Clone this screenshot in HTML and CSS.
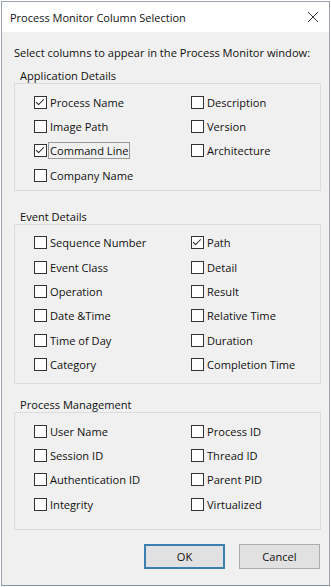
FILE: index.html
```html
<!DOCTYPE html>
<html lang="en">

<head>
    <meta charset="UTF-8">
    <meta name="viewport" content="width=device-width, initial-scale=1.0">
    <title>Process Monitor Column Selection</title>
    <link rel="stylesheet" href="styles.css">
</head>

<body>
    <div class="window">
        <div class="titlebar">
            <span class="title">Process Monitor Column Selection</span>
            <svg class="close" width="12" height="12" viewBox="0 0 12 12">
                <path d="M1 1 L11 11 M11 1 L1 11" stroke="#333" stroke-width="1" fill="none" />
            </svg>
        </div>

        <div class="content">
            <p class="prompt">Select columns to appear in the Process Monitor window:</p>

            <div class="group group-app">
                <div class="group-title">Application Details</div>
                <div class="opts">
                    <label class="opt"><span class="box checked"></span>Process Name</label>
                    <label class="opt"><span class="box"></span>Description</label>
                    <label class="opt"><span class="box"></span>Image Path</label>
                    <label class="opt"><span class="box"></span>Version</label>
                    <label class="opt"><span class="box checked"></span><span class="focus">Command Line</span></label>
                    <label class="opt"><span class="box"></span>Architecture</label>
                    <label class="opt"><span class="box"></span>Company Name</label>
                </div>
            </div>

            <div class="group group-event">
                <div class="group-title">Event Details</div>
                <div class="opts">
                    <label class="opt"><span class="box"></span>Sequence Number</label>
                    <label class="opt"><span class="box checked"></span>Path</label>
                    <label class="opt"><span class="box"></span>Event Class</label>
                    <label class="opt"><span class="box"></span>Detail</label>
                    <label class="opt"><span class="box"></span>Operation</label>
                    <label class="opt"><span class="box"></span>Result</label>
                    <label class="opt"><span class="box"></span>Date &amp;Time</label>
                    <label class="opt"><span class="box"></span>Relative Time</label>
                    <label class="opt"><span class="box"></span>Time of Day</label>
                    <label class="opt"><span class="box"></span>Duration</label>
                    <label class="opt"><span class="box"></span>Category</label>
                    <label class="opt"><span class="box"></span>Completion Time</label>
                </div>
            </div>

            <div class="group group-proc">
                <div class="group-title">Process Management</div>
                <div class="opts">
                    <label class="opt"><span class="box"></span>User Name</label>
                    <label class="opt"><span class="box"></span>Process ID</label>
                    <label class="opt"><span class="box"></span>Session ID</label>
                    <label class="opt"><span class="box"></span>Thread ID</label>
                    <label class="opt"><span class="box"></span>Authentication ID</label>
                    <label class="opt"><span class="box"></span>Parent PID</label>
                    <label class="opt"><span class="box"></span>Integrity</label>
                    <label class="opt"><span class="box"></span>Virtualized</label>
                </div>
            </div>

            <div class="buttons">
                <button class="btn btn-ok">OK</button>
                <button class="btn">Cancel</button>
            </div>
        </div>
    </div>
</body>

</html>
```

FILE: styles.css
```css
* {
    box-sizing: border-box;
}

body {
    margin: 0;
    padding: 1px;
    background-color: #ffffff;
    font-family: "Open Sans", "Noto Sans", sans-serif;
    font-size: 11.1px;
    color: #111111;
}

.window {
    width: 329px;
    height: 585px;
    border: 1px solid #9aa3ab;
    border-bottom-color: #7c98ad;
    background-color: #f0f0f0;
    display: flex;
    flex-direction: column;
}

.titlebar {
    height: 30px;
    background-color: #ffffff;
    display: flex;
    align-items: center;
    justify-content: space-between;
    padding: 0 10px 0 8px;
    flex-shrink: 0;
}

.title {
    font-size: 11px;
    color: #111;
}

.close {
    display: block;
}

.content {
    padding: 13px 8px 0 12px;
}

.prompt {
    margin: 0;
    line-height: 16px;
}

/* group boxes */
.group {
    border: 1px solid #dcdcdc;
    padding: 0 0 2px 19px;
}

.group-title {
    display: table;
    margin: -15px 0 0 -16px;
    padding: 0 2px;
    line-height: 14px;
    background-color: #f0f0f0;
}

.group-app {
    margin-top: 22px;
}

.group-event {
    margin-top: 33px;
    padding-bottom: 6px;
}

.group-proc {
    margin-top: 28px;
    padding-bottom: 13px;
}

.opts {
    display: grid;
    grid-template-columns: 157px 1fr;
    grid-auto-rows: 24.4px;
    margin-top: 7px;
}

.opt {
    display: flex;
    align-items: center;
    white-space: nowrap;
}

.box {
    width: 13px;
    height: 13px;
    border: 1px solid #333333;
    background-color: #ffffff;
    margin-right: 3px;
    flex-shrink: 0;
    position: relative;
}

.box.checked::after {
    content: "";
    position: absolute;
    left: 3px;
    top: 0px;
    width: 3px;
    height: 7px;
    border: solid #222;
    border-width: 0 1px 1px 0;
    transform: rotate(45deg);
}

.focus {
    outline: 1px solid #9a9a9a;
    padding: 0 1px;
    margin-left: -1px;
}

.buttons {
    display: flex;
    justify-content: flex-end;
    gap: 14px;
    margin-top: 14px;
    padding-right: 1px;
}

.btn {
    width: 81px;
    height: 25px;
    background-color: #e1e1e1;
    border: 1px solid #adadad;
    font-family: inherit;
    font-size: 11.1px;
    color: #111;
    padding: 0;
}

.btn-ok {
    border: 2px solid #3c7fb1;
}
```
